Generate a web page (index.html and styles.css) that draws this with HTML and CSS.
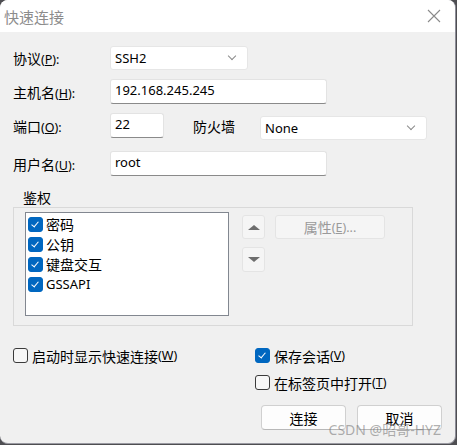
FILE: index.html
```html
<!DOCTYPE html>
<html lang="zh-CN">
<head>
    <meta charset="UTF-8">
    <title>快速连接</title>
    <link rel="stylesheet" href="styles.css">
</head>
<body>
    <div class="dialog">
        <div class="titlebar">
            <span class="title">快速连接</span>
            <svg class="close" width="14" height="14" viewBox="0 0 14 14">
                <path d="M1 1 L13 13 M13 1 L1 13" stroke="#8a8a8a" stroke-width="1.1" fill="none"/>
            </svg>
        </div>
        <div class="content">
            <div class="row r1">
                <span class="lbl">协议<span class="key">(<u>P</u>):</span></span>
                <div class="select w-proto"><span>SSH2</span><i class="chev"></i></div>
            </div>
            <div class="row r2">
                <span class="lbl">主机名<span class="key">(<u>H</u>):</span></span>
                <div class="input w-host">192.168.245.245</div>
            </div>
            <div class="row r3">
                <span class="lbl">端口<span class="key">(<u>O</u>):</span></span>
                <div class="input w-port">22</div>
                <span class="lbl fw">防火墙</span>
                <div class="select w-fw"><span>None</span><i class="chev"></i></div>
            </div>
            <div class="row r4">
                <span class="lbl">用户名<span class="key">(<u>U</u>):</span></span>
                <div class="input w-host">root</div>
            </div>

            <div class="group-label">鉴权</div>
            <div class="group">
                <div class="listbox">
                    <div class="item"><span class="cb on"></span>密码</div>
                    <div class="item"><span class="cb on"></span>公钥</div>
                    <div class="item"><span class="cb on"></span>键盘交互</div>
                    <div class="item"><span class="cb on"></span>GSSAPI</div>
                </div>
                <div class="arrows">
                    <div class="btn-arrow"><i class="tri up"></i></div>
                    <div class="btn-arrow down-btn"><i class="tri down"></i></div>
                </div>
                <div class="btn-prop">属性<span class="key">(<u>E</u>)...</span></div>
            </div>

            <div class="options">
                <div class="opt-left">
                    <div class="check"><span class="cb"></span>启动时显示快速连接<span class="key">(<u>W</u>)</span></div>
                </div>
                <div class="opt-right">
                    <div class="check"><span class="cb on"></span>保存会话<span class="key">(<u>V</u>)</span></div>
                    <div class="check second"><span class="cb"></span>在标签页中打开<span class="key">(<u>T</u>)</span></div>
                </div>
            </div>

            <div class="buttons">
                <div class="btn">连接</div>
                <div class="btn">取消</div>
            </div>
        </div>
        <div class="watermark">CSDN @昭哥-HYZ</div>
    </div>
</body>
</html>
```

FILE: styles.css
```css
body {
    margin: 0;
    background: #4e4e52;
    width: 457px;
    height: 445px;
    overflow: hidden;
    font-family: "Noto Sans", "Noto Sans CJK SC", sans-serif;
    font-size: 14px;
    color: #000;
}
.dialog {
    position: relative;
    width: 455px;
    height: 443px;
    background: #f0f0f0;
    border-right: 1px solid #8d8d98;
    border-bottom: 1px solid #9a9aa2;
    border-radius: 8px;
    overflow: hidden;
}
.titlebar {
    height: 32px;
    background: #fff;
    display: flex;
    align-items: center;
    justify-content: space-between;
    padding: 0 8px 0 4px;
}
.title {
    font-family: "Noto Sans CJK SC", sans-serif;
    font-size: 15px;
    color: #8c8c8c;
}
.close {
    margin-right: 6px;
}
.content {
    padding-left: 13px;
}
.key {
    font-size: 12.5px;
}
.row {
    display: flex;
    align-items: center;
}
.lbl {
    width: 97px;
    font-family: "Noto Sans CJK SC", sans-serif;
    flex: none;
}
.lbl .key {
    font-family: "Noto Sans", sans-serif;
}
.r1 { margin-top: 14px; }
.r2 { margin-top: 9px; }
.r3 { margin-top: 9px; align-items: flex-start; }
.r3 .lbl { margin-top: 3px; }
.r4 { margin-top: 11px; }
.fw {
    width: 67px;
    margin-left: 29px;
}
.input {
    height: 25px;
    box-sizing: border-box;
    background: #fff;
    border: 1px solid #e3e3e3;
    border-bottom: 1px solid #8a8a8a;
    border-radius: 3px;
    padding: 0 4px;
    font-size: 13px;
    line-height: 21px;
}
.select {
    height: 24px;
    box-sizing: border-box;
    background: #fff;
    border: 1px solid #e6e6e6;
    border-radius: 3px;
    padding: 0 4px;
    font-size: 13px;
    display: flex;
    align-items: center;
    justify-content: space-between;
}
.chev {
    width: 5px;
    height: 5px;
    border-right: 1px solid #8a8a8a;
    border-bottom: 1px solid #8a8a8a;
    transform: rotate(45deg);
    margin: -4px 8px 0 0;
}
.w-proto { width: 138px; }
.w-host { width: 217px; }
.w-port { width: 54px; }
.w-fw { width: 167px; margin-top: 3px; }

.group-label {
    margin-top: 12px;
    padding-left: 10px;
    height: 19px;
    line-height: 19px;
    font-family: "Noto Sans CJK SC", sans-serif;
}
.group {
    width: 400px;
    height: 119px;
    box-sizing: border-box;
    border: 1px solid #d9d9d9;
    padding: 4px 0 0 11px;
    display: flex;
    align-items: flex-start;
}
.listbox {
    width: 204px;
    height: 104px;
    box-sizing: border-box;
    background: #fff;
    border: 1px solid #828790;
    padding: 1px 0 0 2px;
}
.item {
    height: 20px;
    display: flex;
    align-items: center;
    font-family: "Noto Sans CJK SC", sans-serif;
}
.item:last-child {
    font-family: "Noto Sans", sans-serif;
    font-size: 13px;
}
.cb {
    width: 15px;
    height: 15px;
    box-sizing: border-box;
    border: 1px solid #3b3b3b;
    border-radius: 3px;
    background: #f7f7f7;
    margin-right: 3px;
    flex: none;
    position: relative;
}
.cb.on {
    background: #0067c0;
    border-color: #0067c0;
}
.cb.on::after {
    content: "";
    position: absolute;
    left: 4px;
    top: 2px;
    width: 3px;
    height: 6px;
    border-right: 1px solid #fff;
    border-bottom: 1px solid #fff;
    transform: rotate(40deg);
}
.arrows {
    margin: 3px 0 0 13px;
}
.btn-arrow {
    width: 23px;
    height: 24px;
    box-sizing: border-box;
    border: 1px solid #e4e4e4;
    border-radius: 3px;
    background: #f5f5f5;
    display: flex;
    align-items: center;
    justify-content: center;
}
.down-btn {
    margin-top: 8px;
    height: 25px;
}
.tri {
    width: 0;
    height: 0;
    border-left: 6px solid transparent;
    border-right: 6px solid transparent;
}
.tri.up { border-bottom: 5px solid #6d6d6d; }
.tri.down { border-top: 5px solid #6d6d6d; }
.btn-prop {
    margin: 3px 0 0 10px;
    width: 110px;
    height: 24px;
    box-sizing: border-box;
    border: 1px solid #e4e4e4;
    border-radius: 3px;
    background: #f5f5f5;
    color: #9a9a9a;
    font-family: "Noto Sans CJK SC", sans-serif;
    display: flex;
    align-items: center;
    justify-content: center;
}
.btn-prop .key {
    font-family: "Noto Sans", sans-serif;
}

.options {
    display: flex;
    margin-top: 22px;
}
.opt-left {
    width: 242px;
}
.check {
    height: 15px;
    display: flex;
    align-items: center;
    font-family: "Noto Sans CJK SC", sans-serif;
    white-space: nowrap;
}
.check .cb {
    margin-right: 4px;
}
.check .key {
    font-family: "Noto Sans", sans-serif;
}
.check.second {
    margin-top: 12px;
}
.buttons {
    display: flex;
    justify-content: flex-end;
    gap: 11px;
    margin-top: 15px;
    padding-right: 13px;
}
.btn {
    width: 85px;
    height: 25px;
    box-sizing: border-box;
    background: #fdfdfd;
    border: 1px solid #d0d0d0;
    border-bottom-color: #b8b8b8;
    border-radius: 4px;
    display: flex;
    align-items: center;
    justify-content: center;
    font-family: "Noto Sans CJK SC", sans-serif;
}
.watermark {
    position: absolute;
    right: 14px;
    bottom: 4px;
    font-family: "Noto Sans", "Noto Sans CJK SC", sans-serif;
    font-size: 14px;
    color: rgba(110, 110, 110, 0.55);
}
```
